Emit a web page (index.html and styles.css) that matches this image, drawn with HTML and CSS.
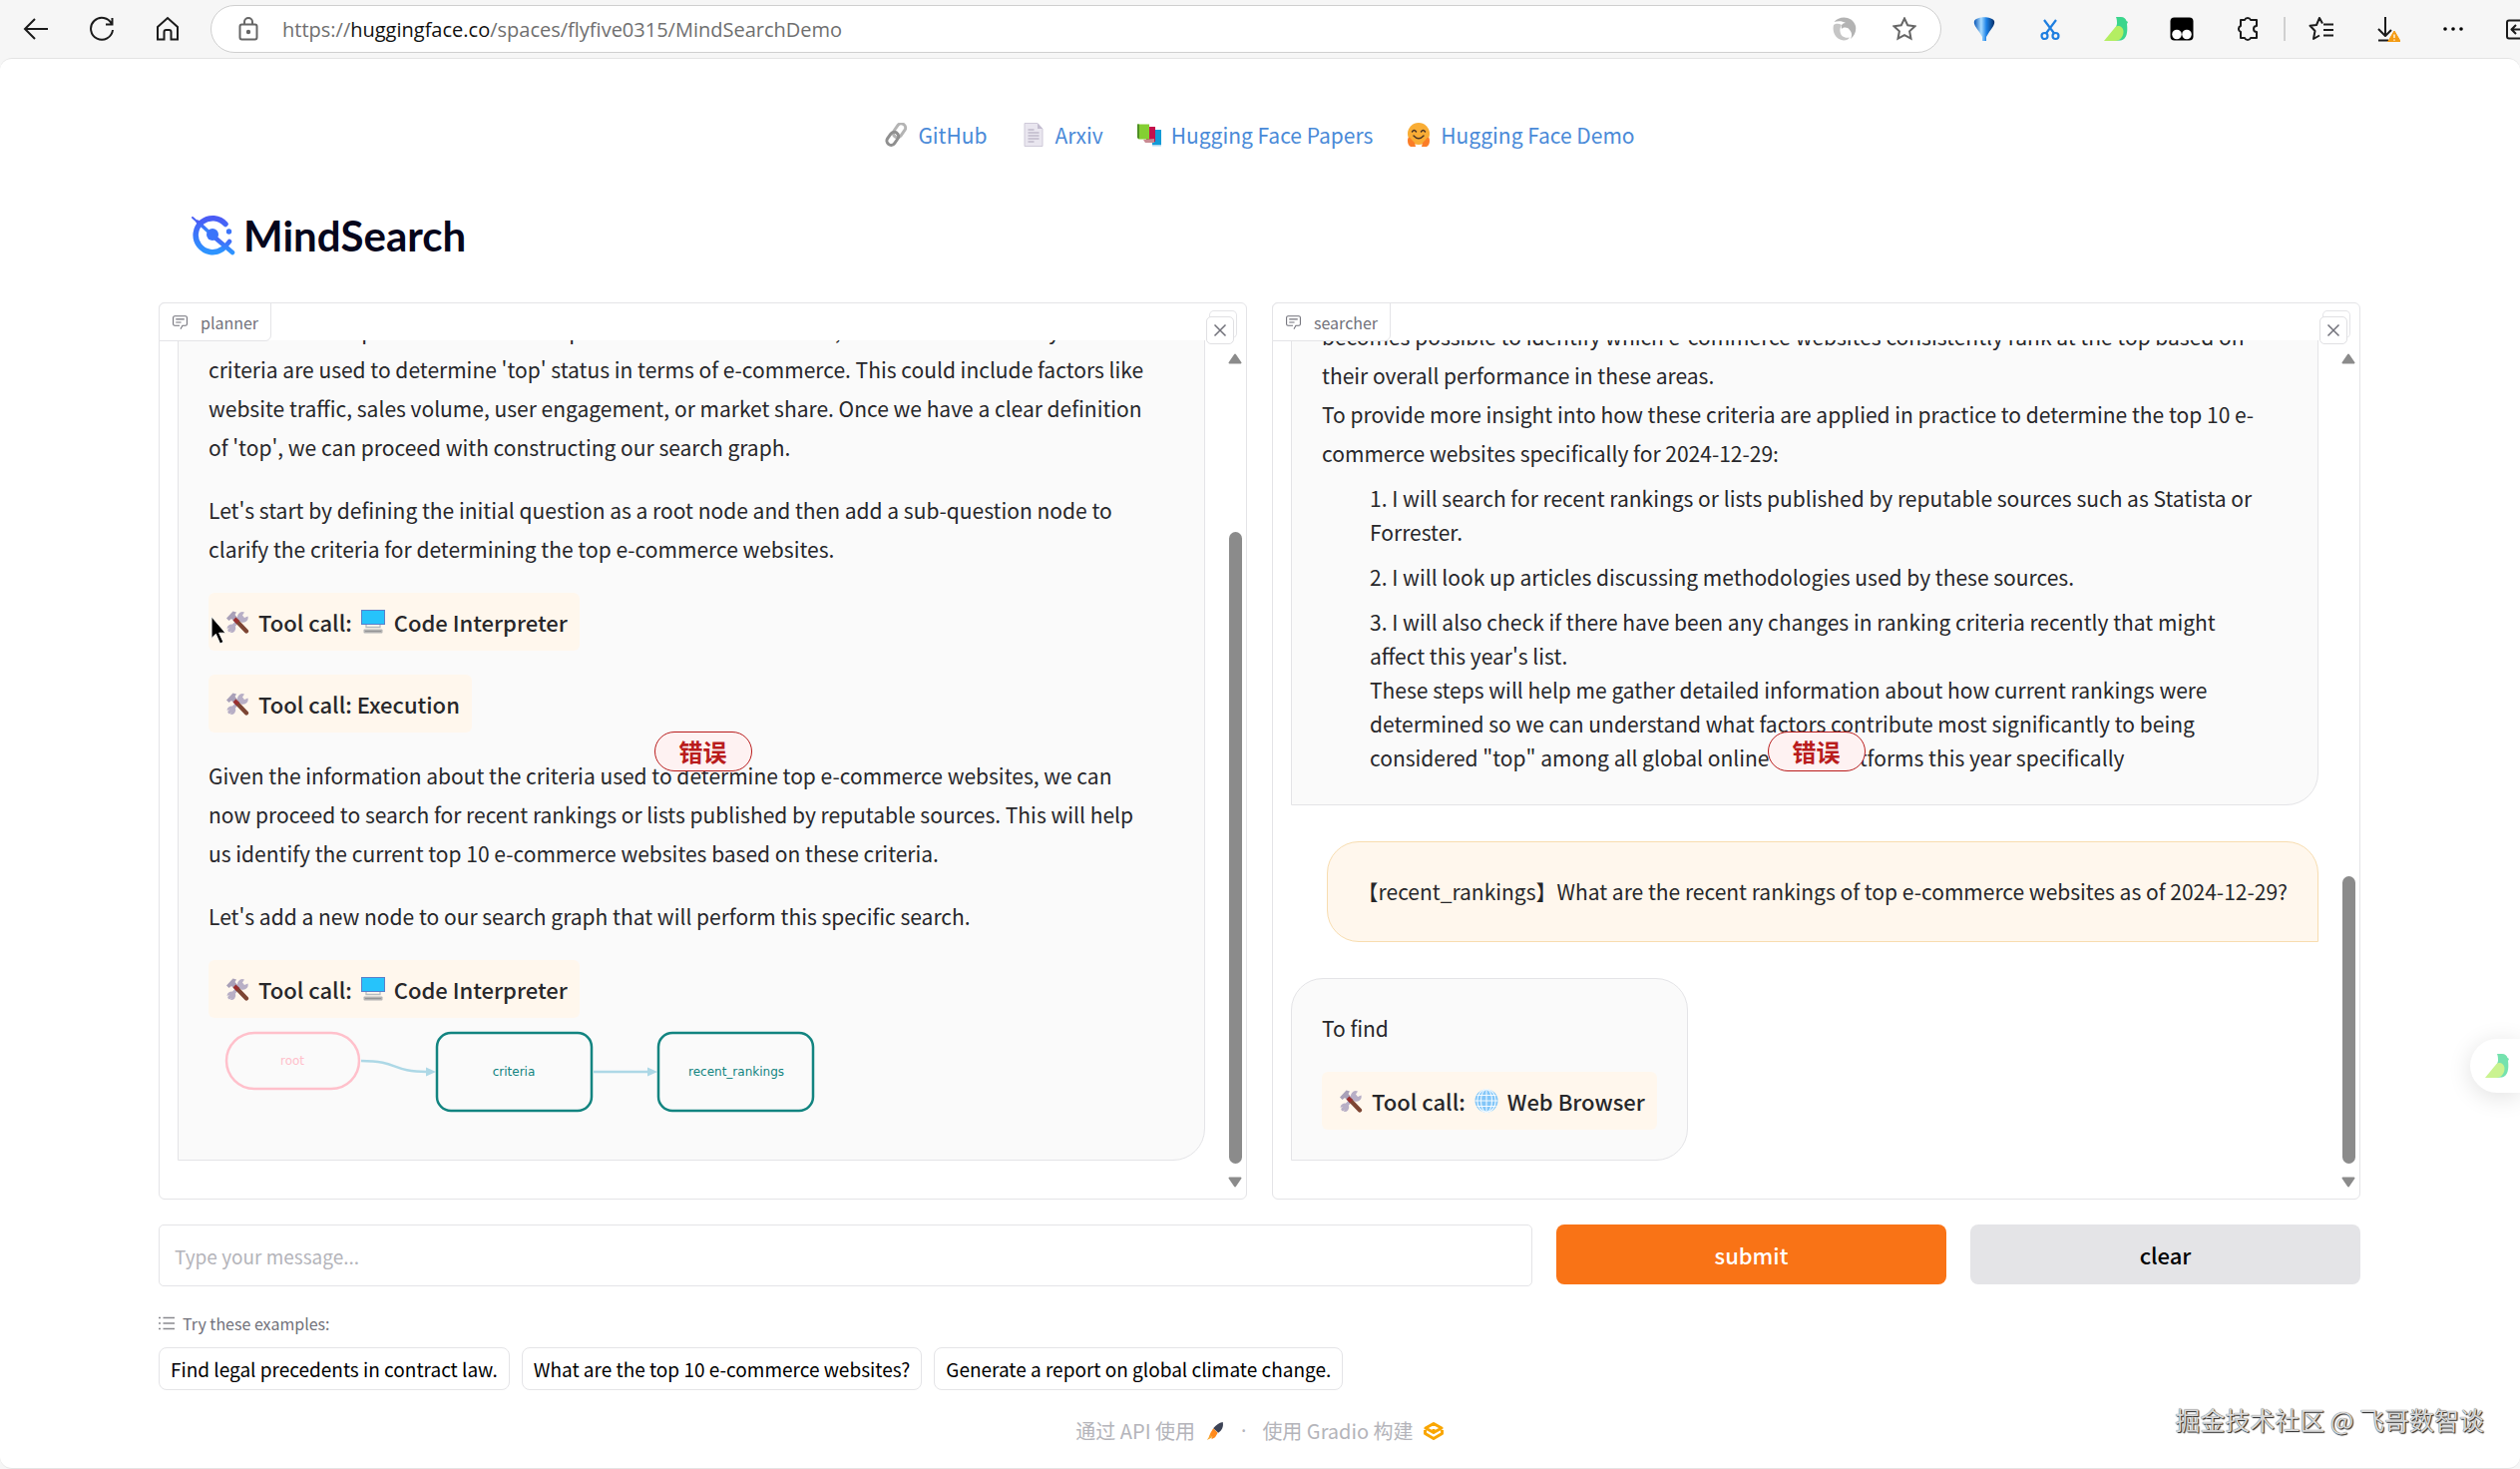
FILE: index.html
```html
<!DOCTYPE html>
<html lang="zh-CN">
<head>
  <meta charset="UTF-8" />
  <title>MindSearch</title>
  <link rel="stylesheet" href="styles.css">
</head>
<body>

  <!-- shared icons -->
  <svg class="sprite" aria-hidden="true">
    <symbol id="i-tools" viewBox="0 0 24 24">
      <path d="M4 20.500L14 9.500" stroke="#b8afc6" stroke-width="3.400" stroke-linecap="round" />
      <path d="M13 10a5 5 0 0 1 6-7.500L17 5.500l2 2.500 3.500-1.500A5 5 0 0 1 15 12z" fill="#b8afc6" />
      <path d="M8 15a4.500 4.500 0 0 0-6.500 4L4 18l2 2-1 3a4.500 4.500 0 0 0 5-6z" fill="#b8afc6" />
      <path d="M10.500 10.500L21 21.500" stroke="#7d4533" stroke-width="4.200" stroke-linecap="round" />
      <path d="M1 8.500L7.500 1.500 11 2.500 9.500 5l3.500 4-3.500 3.500L6 9 3.500 11z" fill="#a9a0b8" />
      <path d="M9 9l3.500 3.500" stroke="#9b2f2f" stroke-width="4" />
    </symbol>
    <symbol id="i-computer" viewBox="0 0 24 24">
      <rect x="0.500" y="0.500" width="23" height="14" fill="#26c3fb" stroke="#5b7fc9" />
      <path d="M5 15v2.500h14V15" fill="none" stroke="#b5bcc0" stroke-width="1.300" />
      <rect x="2.500" y="19.500" width="19" height="4" rx="1" fill="#b4b4b4" />
      <path d="M4 21.500h16" stroke="#8d8d8d" stroke-width="0.800" />
    </symbol>
    <symbol id="i-globe" viewBox="0 0 24 24">
      <circle cx="12" cy="12" r="11.500" fill="#82c6f8" />
      <g fill="none" stroke="#f2faff" stroke-width="1.100">
        <path d="M12 .500v23M.500 12h23M2.500 6.500h19M2.500 17.500h19" />
        <ellipse cx="12" cy="12" rx="5.500" ry="11.500" />
        <ellipse cx="12" cy="12" rx="9.200" ry="11.500" />
      </g>
    </symbol>
    <symbol id="i-chat" viewBox="0 0 32 32">
      <path fill="currentColor" d="M17.740 30L16 29l4-7h6a2 2 0 0 0 2-2V8a2 2 0 0 0-2-2H6a2 2 0 0 0-2 2v12a2 2 0 0 0 2 2h9v2H6a4 4 0 0 1-4-4V8a4 4 0 0 1 4-4h20a4 4 0 0 1 4 4v12a4 4 0 0 1-4 4h-4.840zM8 10h16v2H8zm0 6h10v2H8z" />
    </symbol>
    <symbol id="i-close" viewBox="0 0 16 16">
      <path d="M2.500 2.500l11 11M13.500 2.500l-11 11" stroke="currentColor" stroke-width="1.500" />
    </symbol>
    <symbol id="i-bird" viewBox="0 0 26 26">
      <path d="M13 1h5c3 0 5 2 5.500 4l1.500 1-1 2c1 8 0 15-6 16.500L9 25l5-17c0-2 0-5-1-7z" fill="#3bd68c" />
      <path d="M12.500 11c2-2 8-1 8 5 0 5-4 9-8 9H1z" fill="#b4ee62" />
    </symbol>
    <symbol id="i-up" viewBox="0 0 14 11">
      <path d="M7 1.500L12.500 9.500h-11z" fill="#8b8b8b" stroke="#8b8b8b" stroke-width="2" stroke-linejoin="round" />
    </symbol>
    <symbol id="i-down" viewBox="0 0 14 11">
      <path d="M7 9.500L12.500 1.500h-11z" fill="#8b8b8b" stroke="#8b8b8b" stroke-width="2" stroke-linejoin="round" />
    </symbol>
  </svg>

  <header class="toolbar">
    <div class="nav-buttons">
      <button aria-label="Back"><svg viewBox="0 0 26 26"><path d="M25 13H2M12 3L2 13l10 10" /></svg></button>
      <button aria-label="Reload"><svg viewBox="0 0 26 26"><path d="M23 8A11 11 0 1 0 24 14M23.500 2v6.500H17" /></svg></button>
      <button aria-label="Home"><svg viewBox="0 0 26 26"><path d="M3 11L13 2l10 9v12.500h-6.500V16a2 2 0 0 0-2-2h-3a2 2 0 0 0-2 2v7.500H3z" /></svg></button>
    </div>
    <div class="address">
      <svg class="lock" viewBox="0 0 24 24"><rect x="3.500" y="7.500" width="17" height="15" rx="2" /><path d="M8 7.500V5a4 4 0 0 1 8 0v2.500" /><circle cx="12" cy="15" r="1.200" fill="#555" /></svg>
      <span class="url">https://<b>huggingface.co</b>/spaces/flyfive0315/MindSearchDemo</span>
      <svg class="swirl" viewBox="0 0 24 24">
        <path d="M1.500 5C7-2 20-1 23 9c1 5-1 10-5 13 2-4 1-7-1-9-2-3-6-3-8-1-1-4 1-6 4-6-3-2-8-2-11.500-1z" fill="#b3b3b3" />
        <path d="M1 8c-2 8 3 15 10 15.500 3 0 5-1 6-3-5 1-9-1-9.500-6C7 12 8 10 9 8 6 6 3 6.500 1 8z" fill="#c6c6c6" />
      </svg>
      <svg class="star" viewBox="0 0 24 24"><path d="M12 1.500l3.200 6.800 7.300.900-5.400 5.100 1.400 7.400L12 18.100l-6.500 3.600 1.400-7.400L1.500 9.200l7.300-.900z" /></svg>
    </div>
    <div class="extensions">
      <svg viewBox="0 0 26 26">
        <defs><linearGradient id="balloon"><stop offset="0" stop-color="#0a57b8" /><stop offset=".35" stop-color="#a9dcff" /><stop offset=".6" stop-color="#1d83e8" /><stop offset="1" stop-color="#052d66" /></linearGradient></defs>
        <path d="M3 5c3-5 17-5 20 0 1 3-2 7-5 11l-3 5v4h-4v-4l-3-5C5 12 2 8 3 5z" fill="url(#balloon)" />
      </svg>
      <svg viewBox="0 0 26 26"><g fill="none" stroke="#1f7fe0" stroke-width="2.200"><path d="M7 4l10.500 14M19 4L8.500 18" /><circle cx="7.500" cy="20" r="3" /><circle cx="18.500" cy="20" r="3" /></g></svg>
      <svg viewBox="0 0 26 26"><use href="#i-bird" /></svg>
      <svg viewBox="0 0 26 26"><rect x="1.500" y="1.500" width="23" height="23" rx="4" fill="#000" /><circle cx="8" cy="18.500" r="4.800" fill="#fff" /><circle cx="18" cy="18.500" r="4.800" fill="#fff" /></svg>
      <svg viewBox="0 0 26 26"><path class="line" d="M6 4h4a3.200 3.200 0 0 1 6 0h6v6a2.800 2.800 0 0 0 0 6v6h-6a3.200 3.200 0 0 1-6 0H6v-6a3.200 3.200 0 0 1 0-6z" /></svg>
      <span class="divider"></span>
      <svg viewBox="0 0 26 26"><path class="line" d="M14 7.500L11 2 8 9l-6.500.800L6.500 15 5 23l6-3.500M15 8.500h10M15 14h10M15 19.500h10" /></svg>
      <svg viewBox="0 0 26 26"><path class="line" d="M11 1v19M4 13l7 7 6-6M4 24.500h10" /><path d="M20 15l6.500 11h-13z" fill="#f49b13" stroke="#f49b13" stroke-linejoin="round" /><path d="M20 18.500v3.500M20 23.500v1.200" stroke="#fff" stroke-width="1.300" /></svg>
      <svg viewBox="0 0 26 26"><circle cx="5" cy="13" r="1.800" /><circle cx="13" cy="13" r="1.800" /><circle cx="21" cy="13" r="1.800" /></svg>
      <svg viewBox="0 0 26 26"><path class="line" d="M26 4.500H3a2 2 0 0 0-2 2v14a2 2 0 0 0 2 2h23M18 13.500H6M10 9l-4.500 4.500L10 18" /></svg>
    </div>
  </header>

  <main class="page">
    <nav class="links">
      <a href="#">
        <svg viewBox="0 0 24 24"><g fill="none" stroke-width="3"><rect x="11" y="0" width="8.500" height="15" rx="4.200" transform="rotate(35 15 8)" stroke="#b4b4b4" /><rect x="4.500" y="9" width="8.500" height="14" rx="4.200" transform="rotate(35 9 16)" stroke="#8f8f8f" /></g></svg>
        GitHub
      </a>
      <a href="#">
        <svg viewBox="0 0 24 24"><path d="M3 .500h13l5 5.500v17.500H3z" fill="#e9e6ef" stroke="#cfcad9" /><path d="M16 .500V6h5" fill="#c3bccf" /><path d="M6.500 7h6M6.500 10h11M6.500 13h11M6.500 16h11M6.500 19h6" stroke="#aaa3b8" /></svg>
        Arxiv
      </a>
      <a href="#">
        <svg viewBox="0 0 24 24"><path d="M15 7h9v15h-9z" fill="#139bd7" /><path d="M15 22h9v1.500h-9z" fill="#a9d6ee" /><path d="M9 4h9v15H9z" fill="#c4104b" /><path d="M6 17l11-1v4H8z" fill="#c98b92" /><path d="M0 1.500h12v15H2L0 15z" fill="#84cf33" /><path d="M0 1.500h2v15L0 15z" fill="#4d8f24" /></svg>
        Hugging Face Papers
      </a>
      <a href="#">
        <svg viewBox="0 0 24 24"><circle cx="12" cy="11" r="11" fill="#f9ad35" /><path d="M1 18c0-4 2-4 4-1l3 3 1 4H4c-2-1-3-3-3-6zM23 18c0-4-2-4-4-1l-3 3-1 4h5c2-1 3-3 3-6z" fill="#fb7d27" /><path d="M5.500 9q2-3 4 0M14.500 9q2-3 4 0M7 13q5 5.500 10 0" fill="none" stroke="#4a3524" stroke-width="1.500" stroke-linecap="round" /></svg>
        Hugging Face Demo
      </a>
    </nav>

    <h1 class="brand">
      <svg viewBox="0 0 44 42">
        <defs><linearGradient id="brand" x1="0" y1="0" x2="0" y2="1"><stop offset="0" stop-color="#4a5bf5" /><stop offset="1" stop-color="#2d94ff" /></linearGradient></defs>
        <g fill="none" stroke="url(#brand)" stroke-linecap="round">
          <path d="M34 9.500A17 17 0 1 0 31 34.500" stroke-width="5.500" />
          <path d="M1 3l18 16" stroke-width="2" />
          <path d="M6 7l14 13" stroke-width="3.500" />
          <path d="M21 21l20 17M38 27l-5 6" stroke-width="4.500" />
        </g>
        <circle cx="21" cy="20" r="6" fill="#3b74fa" />
        <circle cx="37.500" cy="17" r="2.700" fill="#3b74fa" />
      </svg>
      MindSearch
    </h1>

    <section class="chats">
      <div class="chatbot">
        <div class="chat-label"><svg><use href="#i-chat" /></svg>planner</div>
        <button class="close" aria-label="Close error"><svg><use href="#i-close" /></svg></button>
        <span class="error">错误</span>
        <div class="chat-body">
          <div class="messages">
            <div class="bubble bot full">
              <p>To assess the top 10 e-commerce shops for 2024-12-29 in one list, we need to first clarify what<br>
                criteria are used to determine 'top' status in terms of e-commerce. This could include factors like<br>
                website traffic, sales volume, user engagement, or market share. Once we have a clear definition<br>
                of 'top', we can proceed with constructing our search graph.</p>
              <p>Let's start by defining the initial question as a root node and then add a sub-question node to<br>
                clarify the criteria for determining the top e-commerce websites.</p>
              <div class="tool"><svg><use href="#i-tools" /></svg>Tool call:<svg><use href="#i-computer" /></svg>Code Interpreter</div>
              <div class="tool"><svg><use href="#i-tools" /></svg>Tool call: Execution</div>
              <p>Given the information about the criteria used to determine top e-commerce websites, we can<br>
                now proceed to search for recent rankings or lists published by reputable sources. This will help<br>
                us identify the current top 10 e-commerce websites based on these criteria.</p>
              <p>Let's add a new node to our search graph that will perform this specific search.</p>
              <div class="tool"><svg><use href="#i-tools" /></svg>Tool call:<svg><use href="#i-computer" /></svg>Code Interpreter</div>
              <svg class="graph" viewBox="0 0 620 112">
                <g fill="none" stroke="#add8e6" stroke-width="2.500">
                  <path d="M153 43c38 0 30 11 66 11M386 54h56" />
                </g>
                <path d="M218 49.500l10 4.500-10 4.500zM440 49.500l10 4.500-10 4.500z" fill="#add8e6" />
                <rect x="18" y="15" width="133" height="56" rx="28" fill="none" stroke="#ffc0cb" stroke-width="2.500" />
                <rect x="229" y="15" width="155" height="78" rx="14" fill="none" stroke="#128480" stroke-width="2.500" />
                <rect x="451" y="15" width="155" height="78" rx="14" fill="none" stroke="#128480" stroke-width="2.500" />
                <text x="84" y="47" class="pink">root</text>
                <text x="306" y="58">criteria</text>
                <text x="529" y="58">recent_rankings</text>
              </svg>
            </div>
          </div>
          <div class="scrollbar planner-scroll">
            <svg><use href="#i-up" /></svg>
            <div class="track"><div class="thumb"></div></div>
            <svg><use href="#i-down" /></svg>
          </div>
        </div>
      </div>

      <div class="chatbot">
        <div class="chat-label"><svg><use href="#i-chat" /></svg>searcher</div>
        <button class="close" aria-label="Close error"><svg><use href="#i-close" /></svg></button>
        <span class="error">错误</span>
        <div class="chat-body">
          <div class="messages">
            <div class="bubble bot full">
              <p>becomes possible to identify which e-commerce websites consistently rank at the top based on<br>
                their overall performance in these areas.<br>
                To provide more insight into how these criteria are applied in practice to determine the top 10 e-<br>
                commerce websites specifically for 2024-12-29:</p>
              <ol>
                <li>I will search for recent rankings or lists published by reputable sources such as Statista or<br>Forrester.</li>
                <li>I will look up articles discussing methodologies used by these sources.</li>
                <li>I will also check if there have been any changes in ranking criteria recently that might<br>
                  affect this year's list.<br>
                  These steps will help me gather detailed information about how current rankings were<br>
                  determined so we can understand what factors contribute most significantly to being<br>
                  considered "top" among all global online retail platforms this year specifically</li>
              </ol>
            </div>
            <div class="bubble user">【recent_rankings】What are the recent rankings of top e-commerce websites as of 2024-12-29?</div>
            <div class="bubble bot">
              <p>To find</p>
              <div class="tool"><svg><use href="#i-tools" /></svg>Tool call:<svg><use href="#i-globe" /></svg>Web Browser</div>
            </div>
          </div>
          <div class="scrollbar searcher-scroll">
            <svg><use href="#i-up" /></svg>
            <div class="track"><div class="thumb"></div></div>
            <svg><use href="#i-down" /></svg>
          </div>
        </div>
      </div>
    </section>

    <form class="composer" onsubmit="return false">
      <input type="text" placeholder="Type your message..." aria-label="Message" />
      <button class="submit">submit</button>
      <button class="clear" type="reset">clear</button>
    </form>

    <section class="examples">
      <div class="examples-label">
        <svg viewBox="0 0 16 16"><path d="M4.500 2.500H16M4.500 8H16M4.500 13.500H16M0 2.500h2M0 8h2M0 13.500h2" stroke="#8a8a90" stroke-width="1.300" /></svg>
        Try these examples:
      </div>
      <div class="chips">
        <button>Find legal precedents in contract law.</button>
        <button>What are the top 10 e-commerce websites?</button>
        <button>Generate a report on global climate change.</button>
      </div>
    </section>

    <footer class="footer">
      <a href="#">通过 API 使用 <svg viewBox="0 0 20 22"><path d="M18.500 1c1 5-1 9-5 12L8 8c3-4 6-6 10.500-7z" fill="#3d4356" /><path d="M8 8l5 5-3 5-4 2 1-3-4 1 2-5z" fill="#ff8a1c" /><path d="M5 15l-4 6 6-3z" fill="#f5a62f" /></svg></a>
      <span class="dot">·</span>
      <a href="#">使用 Gradio 构建 <svg viewBox="0 0 20 20"><path d="M10 2.500l8 4.500-8 4.500L2 7z" fill="none" stroke="#f9a602" stroke-width="3" stroke-linejoin="round" /><path d="M1.500 9v3.500l8.500 5 8.500-5V9M10 8v4" fill="none" stroke="#f9a602" stroke-width="3" stroke-linejoin="round" /></svg></a>
    </footer>
  </main>

  <svg class="cursor" viewBox="0 0 14 27"><path d="M1 1v20l4-4 4 9 3-1.500-4-8.500h6z" fill="#000" stroke="#fff" stroke-width="0.800" /></svg>
  <button class="side-tab" aria-label="Assistant"><svg><use href="#i-bird" /></svg></button>
  <div class="watermark">掘金技术社区 @ 飞哥数智谈</div>

</body>
</html>
```

FILE: styles.css
```css
* {
  box-sizing: border-box;
}

body {
  margin: 0;
  min-height: 100vh;
  display: flex;
  flex-direction: column;
  background: #f6f6f6;
  font-family: "Noto Sans CJK SC", "Noto Sans", sans-serif;
  font-size: 21px;
  color: #27272a;
  overflow: hidden;
}

button {
  font-family: inherit;
  cursor: pointer;
}

a {
  text-decoration: none;
}

.sprite {
  position: absolute;
  width: 0;
  height: 0;
}

/* browser toolbar */
.toolbar {
  display: flex;
  align-items: center;
  height: 58px;
  flex-shrink: 0;
}

.nav-buttons {
  display: flex;
  gap: 40px;
  padding: 0 30px 0 23px;
}

.nav-buttons button {
  display: flex;
  padding: 0;
  border: none;
  background: none;
}

.nav-buttons svg {
  width: 26px;
  height: 26px;
  fill: none;
  stroke: #1b1b1b;
  stroke-width: 2;
}

.address {
  flex: 1;
  height: 48px;
  display: flex;
  align-items: center;
  gap: 22px;
  padding: 0 24px 0 25px;
  background: #fff;
  border: 1px solid #cfcfcf;
  border-radius: 24px;
}

.address svg {
  width: 24px;
  height: 24px;
  flex-shrink: 0;
}

.lock, .star {
  fill: none;
  stroke: #666;
  stroke-width: 2;
}

.swirl {
  margin-right: 14px;
}

.url {
  flex: 1;
  font-family: "Open Sans", "Noto Sans", sans-serif;
  font-size: 20px;
  color: #6f6f6f;
}

.url b {
  font-weight: normal;
  color: #111;
}

.extensions {
  flex: 0 0 580px;
  display: flex;
  align-items: center;
  gap: 40px;
  padding-left: 30px;
  overflow: hidden;
}

.extensions svg {
  width: 26px;
  height: 26px;
  flex-shrink: 0;
}

.extensions .line {
  fill: none;
  stroke: #1b1b1b;
  stroke-width: 2;
  stroke-linejoin: round;
}

.divider {
  width: 2px;
  height: 24px;
  flex-shrink: 0;
  margin: 0 -17px;
  background: #d0d0d0;
}

/* page */
.page {
  flex: 1;
  padding: 58px 160px 0 159px;
  background: #fff;
  border: 1px solid #e4e4e4;
  border-width: 1px 0;
  border-radius: 12px;
}

.links {
  display: flex;
  justify-content: center;
  gap: 34px;
}

.links a {
  display: flex;
  align-items: center;
  gap: 10px;
  line-height: 36px;
  color: #4a8ad8;
}

.links svg {
  width: 24px;
  height: 24px;
}

.brand {
  display: flex;
  align-items: center;
  gap: 8px;
  margin: 61px 0 45px;
  padding-left: 33px;
  font-family: Lato, sans-serif;
  font-size: 42px;
  line-height: 44px;
  color: #06061c;
}

.brand svg {
  width: 44px;
  height: 42px;
}

/* chat panels */
.chats {
  display: grid;
  grid-template-columns: repeat(2, minmax(0, 1fr));
  gap: 25px;
}

.chatbot {
  position: relative;
  height: 899px;
  padding-top: 37px;
  border: 1px solid #e4e4e7;
  border-radius: 6px;
}

.chat-label {
  position: absolute;
  top: -1px;
  left: -1px;
  display: flex;
  align-items: center;
  gap: 12px;
  height: 39px;
  padding: 0 12px;
  background: #fff;
  border: 1px solid #e4e4e7;
  border-radius: 6px 0;
  font-size: 16px;
  color: #71717a;
}

.chat-label svg {
  width: 17px;
  height: 17px;
}

.close {
  position: absolute;
  top: 13px;
  right: 12px;
  width: 28px;
  height: 28px;
  padding: 5px;
  background: #fff;
  border: 1px solid #e0e0e3;
  border-radius: 5px;
  box-shadow: 3px -6px 0 -1px #fff, 3px -6px 0 0 #e4e4e7;
  color: #71717a;
}

.close svg {
  display: block;
  width: 16px;
  height: 16px;
}

.error {
  position: absolute;
  top: 50%;
  left: 50%;
  transform: translate(-50%, -50%);
  padding: 0 24px;
  line-height: 38px;
  background: #fef2f2;
  border: 1px solid #b91c1c;
  border-radius: 20px;
  font-size: 24px;
  font-weight: bold;
  color: #b91c1c;
}

.chat-body {
  display: flex;
  height: 100%;
}

.messages {
  flex: 1;
  display: flex;
  flex-direction: column;
  justify-content: flex-end;
  align-items: flex-start;
  gap: 36px;
  min-width: 0;
  padding: 0 23px 38px 18px;
  overflow: hidden;
}

.bubble {
  padding: 30px;
  border: 1px solid #e4e4e7;
  border-radius: 32px;
  line-height: 39px;
  white-space: nowrap;
}

.bot {
  background: #fafafa;
  border-bottom-left-radius: 0;
}

.full {
  width: 100%;
}

.user {
  align-self: flex-end;
  background: #fff7ed;
  border-color: #f8ddb0;
  border-bottom-right-radius: 0;
}

.bubble p {
  margin: 0 0 24px;
}

.tool {
  display: flex;
  align-items: center;
  gap: 9px;
  width: fit-content;
  height: 58px;
  margin-bottom: 24px;
  padding: 0 12px 0 17px;
  background: #fff7ed;
  border-radius: 6px;
  font-size: 22px;
  font-weight: 500;
}

.tool:last-child {
  margin-bottom: 0;
}

.tool svg {
  width: 24px;
  height: 24px;
}

.bubble ol {
  margin: 0;
  padding-left: 48px;
  line-height: 34px;
  list-style-position: inside;
}

.bubble ol li {
  margin-bottom: 11px;
}

.bubble ol li:last-child {
  margin-bottom: 0;
}

.bubble p:has(+ ol) {
  margin-bottom: 8px;
}

.graph {
  display: block;
  width: 620px;
  height: 112px;
  margin-top: -24px;
}

.graph text {
  font-family: "DejaVu Sans", sans-serif;
  font-size: 12px;
  text-anchor: middle;
  fill: #128480;
}

.graph .pink {
  fill: #ffc0cb;
}

.scrollbar {
  display: flex;
  flex-direction: column;
  align-items: center;
  width: 14px;
  margin-right: 4px;
  padding: 13px 0 11px;
}

.scrollbar svg {
  width: 14px;
  height: 11px;
}

.track {
  flex: 1;
  display: flex;
  align-items: flex-end;
  padding-bottom: 13px;
}

.thumb {
  width: 13px;
  background: #8b8b8b;
  border-radius: 7px;
}

.planner-scroll .thumb {
  height: 79%;
}

.searcher-scroll .thumb {
  height: 36%;
}

/* input row */
.composer {
  display: grid;
  grid-template-columns: 1fr 391px 391px;
  align-items: start;
  gap: 24px;
  margin-top: 25px;
}

.composer input {
  height: 62px;
  padding: 0 15px;
  border: 1px solid #e4e4e7;
  border-radius: 5px;
  font: inherit;
  font-size: 19px;
}

.composer input::placeholder {
  color: #b4b4ba;
}

.composer button {
  height: 60px;
  border: none;
  border-radius: 8px;
  font-size: 22px;
  font-weight: 500;
}

.composer .submit {
  background: #f97316;
  color: #fff;
}

.composer .clear {
  background: #e4e4e7;
  color: #000;
}

/* examples */
.examples-label {
  display: flex;
  align-items: center;
  gap: 8px;
  margin: 23px 0 10px;
  font-size: 16px;
  line-height: 28px;
  color: #71717a;
}

.examples-label svg {
  width: 16px;
  height: 16px;
}

.chips {
  display: flex;
  gap: 12px;
}

.chips button {
  height: 43px;
  padding: 0 11px;
  background: #fff;
  border: 1px solid #e4e4e7;
  border-radius: 8px;
  font-size: 19px;
  color: #000;
}

.footer {
  display: flex;
  justify-content: center;
  gap: 16px;
  margin-top: 26px;
  font-size: 20px;
  line-height: 30px;
  color: #b4b4ba;
}

.footer a {
  display: flex;
  align-items: center;
  gap: 10px;
  color: inherit;
}

.footer svg {
  width: 20px;
  height: 20px;
}

.dot {
  font-family: "Noto Sans", sans-serif;
}

/* things floating over the page */
.cursor {
  position: absolute;
  top: 617px;
  left: 211px;
  width: 15px;
  height: 29px;
}

.side-tab {
  position: absolute;
  top: 1041px;
  right: 0;
  width: 50px;
  height: 54px;
  padding: 0 0 0 14px;
  background: #fff;
  border: none;
  border-radius: 27px 0 0 27px;
  box-shadow: 0 4px 24px rgba(0, 0, 0, 0.12);
}

.side-tab svg {
  display: block;
  width: 26px;
  height: 26px;
  opacity: 0.7;
}

.watermark {
  position: absolute;
  right: 36px;
  bottom: 32px;
  font-size: 25px;
  line-height: 36px;
  color: #d8d8d8;
  text-shadow: 1px 1px 1px #222, 0 0 1px #444;
}
```
